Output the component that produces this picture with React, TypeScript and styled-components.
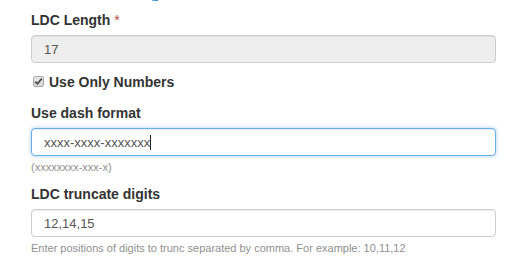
import React from "react";
import styled, { createGlobalStyle } from "styled-components";

const Global = createGlobalStyle`
  html, body { margin: 0; padding: 0; background: #fff; }
  body { font-family: Arial, "Liberation Sans", Helvetica, sans-serif; color: #333; }
`;

const Page = styled.div`
  width: 513px;
  height: 265px;
  overflow: hidden;
  padding: 0 17px 0 31px;
  box-sizing: border-box;
  display: flex;
  flex-direction: column;
`;

const TopStrip = styled.div`
  height: 2px;
  display: flex;
  padding-left: 121px;
`;

const TopMark = styled.span`
  width: 6px;
  height: 1px;
  background: linear-gradient(90deg, #7cb4ec, #2f7fd4);
`;

const Group = styled.div<{ $top: number }>`
  display: flex;
  flex-direction: column;
  margin-top: ${(p) => p.$top}px;
`;

const Label = styled.label`
  font-size: 14px;
  font-weight: bold;
  line-height: 20px;
  height: 20px;
  margin-bottom: 5px;
  color: #333;
`;

const Required = styled.span`
  color: #b94a48;
  font-weight: normal;
  margin-left: 4px;
`;

const Field = styled.div<{ $readonly?: boolean; $focus?: boolean }>`
  height: 28px;
  box-sizing: border-box;
  border: 1px solid ${(p) => (p.$focus ? "#66afe9" : "#ccc")};
  border-radius: 4px;
  background: ${(p) => (p.$readonly ? "#eee" : "#fff")};
  padding: 0 12px;
  display: flex;
  align-items: center;
  font-size: 13px;
  color: #555;
  box-shadow: ${(p) =>
    p.$focus
      ? "inset 0 1px 1px rgba(0,0,0,.075), 0 0 4px rgba(102,175,233,.6)"
      : "inset 0 1px 1px rgba(0,0,0,.075)"};
`;

const Caret = styled.span`
  display: inline-block;
  width: 1px;
  height: 15px;
  background: #222;
`;

const Help = styled.div`
  font-size: 11px;
  line-height: 16px;
  margin-top: 3px;
  color: #8f8f8f;
  white-space: nowrap;
`;

const CheckRow = styled.label`
  display: flex;
  align-items: center;
  gap: 5px;
  margin-top: 9px;
  height: 20px;
  padding-left: 2px;
  font-size: 14px;
  font-weight: bold;
  color: #333;
`;

const CheckBox = styled.span`
  width: 11px;
  height: 11px;
  box-sizing: border-box;
  border: 1px solid #a8a8a8;
  border-radius: 2px;
  background: linear-gradient(#e8e8e8, #d6d6d6);
  display: flex;
  align-items: center;
  justify-content: center;
  margin-top: -1px;
`;

export default function App() {
  return (
    <>
      <Global />
      <Page>
        <TopStrip>
          <TopMark />
        </TopStrip>
        <Group $top={8}>
          <Label>
            LDC Length<Required>*</Required>
          </Label>
          <Field $readonly>17</Field>
        </Group>
        <CheckRow>
          <CheckBox>
            <svg width="9" height="9" viewBox="0 0 9 9">
              <path d="M1.2 4.6 L3.4 6.8 L7.8 1.6" fill="none" stroke="#4a4a4a" strokeWidth="1.7" />
            </svg>
          </CheckBox>
          Use Only Numbers
        </CheckRow>
        <Group $top={11}>
          <Label>Use dash format</Label>
          <Field $focus>
            xxxx-xxxx-xxxxxxx
            <Caret />
          </Field>
          <Help>(xxxxxxxx-xxx-x)</Help>
        </Group>
        <Group $top={9}>
          <Label>LDC truncate digits</Label>
          <Field>12,14,15</Field>
          <Help>Enter positions of digits to trunc separated by comma. For example: 10,11,12</Help>
        </Group>
      </Page>
    </>
  );
}
